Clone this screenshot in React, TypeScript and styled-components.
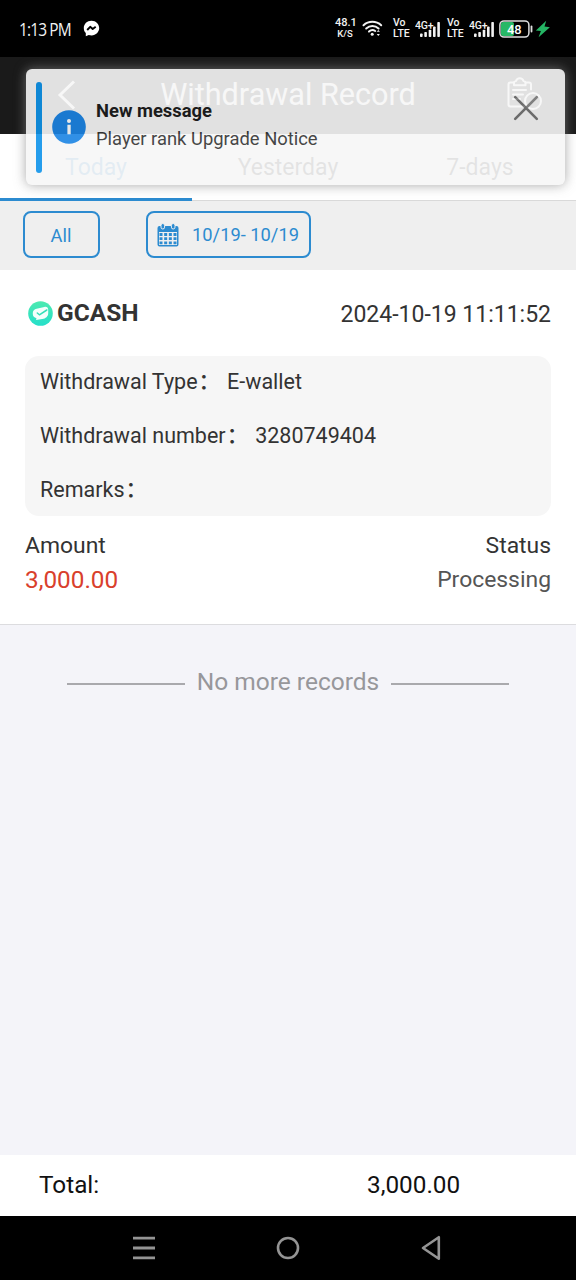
import React from "react";
import styled, { createGlobalStyle } from "styled-components";

const GlobalStyle = createGlobalStyle`
  * { box-sizing: border-box; }
  body {
    margin: 0;
    font-family: Roboto, "Noto Sans CJK SC", sans-serif;
    color: #333;
  }
  svg { display: block; flex: none; }
`;

const Screen = styled.div`
  position: relative;
  width: 576px;
  height: 1280px;
  display: flex;
  flex-direction: column;
  background: #f4f4f9;
  overflow: hidden;
`;

const StatusBar = styled.header`
  height: 57px;
  flex: none;
  display: flex;
  align-items: center;
  padding: 0 25px 0 19px;
  background: #000;
  color: #f2f2f2;
`;

const Clock = styled.span`
  font: 400 18px/24px "Open Sans", sans-serif;
  letter-spacing: -1px;
  width: 64px;
  white-space: nowrap;
  transform: scaleX(0.86);
  transform-origin: left;
`;

const StatusIcons = styled.div`
  display: flex;
  align-items: center;
  margin-left: auto;
`;

const StackedLabel = styled.div<{ $width: number; $gap?: number }>`
  width: ${(p) => p.$width}px;
  margin-right: ${(p) => p.$gap ?? 0}px;
  display: flex;
  flex-direction: column;
  font-size: 10.5px;
  line-height: 10.5px;
  font-weight: 500;
  white-space: nowrap;
`;

const Spacer = styled.span<{ $width: number }>`
  width: ${(p) => p.$width}px;
`;

const Speed = styled.span`
  font-size: 11px;
`;

const SpeedUnit = styled.span`
  align-self: center;
  font-size: 9.5px;
`;

const TitleBar = styled.div`
  height: 77px;
  flex: none;
  display: grid;
  grid-template-columns: 110px 1fr 110px;
  align-items: center;
  padding-bottom: 2px;
  background: #1a1a1a;
  color: #fff;
`;

const Title = styled.h1`
  margin: 0;
  font-size: 30.6px;
  line-height: 36px;
  font-weight: 400;
  text-align: center;
  white-space: nowrap;
`;

const BackSlot = styled.div`
  padding-left: 57px;
`;

const ActionSlot = styled.div`
  padding-left: 41px;
`;

const Tabs = styled.nav`
  height: 67px;
  flex: none;
  display: grid;
  grid-template-columns: repeat(3, 1fr);
  background: #fff;
  border-bottom: 1px solid #d9d9d9;
`;

const Tab = styled.div<{ $active?: boolean }>`
  height: 67px;
  display: flex;
  justify-content: center;
  padding-top: 20px;
  font-size: 23px;
  line-height: 28px;
  color: ${(p) => (p.$active ? "#2c8bd0" : "#333")};
  border-bottom: ${(p) => (p.$active ? "3px solid #2c8bd0" : "none")};
`;

const Filters = styled.div`
  height: 69px;
  flex: none;
  display: flex;
  gap: 46px;
  padding: 10px 23px 0;
  background: #efefef;
`;

const FilterButton = styled.button<{ $width: number; $drop?: number }>`
  width: ${(p) => p.$width}px;
  height: 47px;
  padding: ${(p) => p.$drop ?? 0}px 1px 0 0;
  display: flex;
  align-items: center;
  justify-content: center;
  gap: 13px;
  border: 2px solid #2c8bd0;
  border-radius: 8px;
  background: transparent;
  color: #2c8bd0;
  font: 400 18.3px/24px Roboto, sans-serif;
  white-space: nowrap;
`;

const Record = styled.section`
  height: 355px;
  flex: none;
  padding: 27px 25px 0;
  background: #fff;
  border-bottom: 1px solid #dcdcdf;
`;

const RecordHead = styled.div`
  display: flex;
  align-items: center;
  height: 32px;
  padding-left: 3px;
`;

const Wallet = styled.strong`
  margin-left: 4px;
  padding-bottom: 1px;
  font-size: 24.5px;
  font-weight: 700;
`;

const Timestamp = styled.time`
  margin-left: auto;
  padding-top: 2px;
  font-size: 23px;
`;

const Details = styled.div`
  height: 160px;
  margin: 27px 0 0;
  padding: 12px 15px;
  display: flex;
  flex-direction: column;
  gap: 27px;
  background: #f6f6f6;
  border-radius: 14px;
`;

const DetailRow = styled.div`
  display: flex;
  font-size: 21.5px;
  line-height: 27px;
  white-space: nowrap;
`;

const Colon = styled.span`
  margin: 0 7px 0 1px;
  font-weight: 500;
`;

const SummaryRow = styled.div<{ $top: number }>`
  display: flex;
  justify-content: space-between;
  margin-top: ${(p) => p.$top}px;
  font-size: 22.9px;
  line-height: 30px;
`;

const Amount = styled.span`
  font-size: 24.3px;
  color: #d9402c;
`;

const State = styled.span`
  color: #555;
`;

const EndOfList = styled.div`
  flex: 1;
  display: flex;
  align-items: flex-start;
  justify-content: center;
  gap: 12px;
  padding-top: 42px;
  font-size: 24.5px;
  line-height: 30px;
  color: #97979b;
  white-space: nowrap;
`;

const Rule = styled.span`
  width: 118px;
  height: 2px;
  margin-top: 16px;
  background: #a9a9ad;
`;

const TotalBar = styled.footer`
  height: 61px;
  flex: none;
  display: grid;
  grid-template-columns: 328px 1fr;
  align-items: center;
  padding: 0 0 2px 39px;
  background: #fff;
  color: #111;
  font-size: 24.3px;
`;

const SystemNav = styled.div`
  height: 64px;
  flex: none;
  display: grid;
  grid-template-columns: 72px repeat(3, 144px) 72px;
  align-items: center;
  justify-items: center;
  background: #000;
`;

const Toast = styled.div`
  position: absolute;
  z-index: 2;
  left: 26px;
  top: 69px;
  width: 539px;
  height: 116px;
  display: flex;
  align-items: center;
  padding: 0 26px 0 10px;
  border-radius: 6px;
  background: #f7f7f7;
  box-shadow: 0 0 12px rgba(136, 136, 136, 0.8);
  opacity: 0.9;
`;

const ToastAccent = styled.span`
  width: 6px;
  height: 91px;
  border-radius: 3px;
  background: #0e93ea;
`;

const ToastInfo = styled.div`
  margin-left: 10px;
`;

const ToastText = styled.div`
  margin-left: 10px;
  padding-bottom: 4px;
  flex: 1;
  display: flex;
  flex-direction: column;
  font-size: 18.4px;
  line-height: 28px;
  color: #333;
`;

const ToastTitle = styled.strong`
  color: #1c1c1c;
  font-size: 18.4px;
`;

const ToastClose = styled.div`
  margin-top: -38px;
`;

const MessengerIcon = () => (
  <svg width="17" height="17" viewBox="0 0 17 17">
    <path d="M8.500.7C4 .7.8 3.900.8 8c0 2.200.7 3.800 2 5.100v3.100l2.900-1.200c.9.250 1.800.4 2.800.4 4.500 0 7.700-3.200 7.700-7.300S13 .7 8.500.7Z" fill="#fff" />
    <path d="m4.200 10 3-3.200 2.500 2.100 3-2.200" fill="none" stroke="#000" strokeWidth="1.900" strokeLinejoin="round" />
  </svg>
);

const WifiIcon = () => (
  <svg width="21" height="17" viewBox="0 0 21 17" fill="none" stroke="#f2f2f2" strokeWidth="2" strokeLinecap="round">
    <path d="M1.500 5.200C6.500.6 14.200.6 19.200 5.200M4.200 8.500c3.600-3.200 8.800-3.200 12.400 0M7 11.600c1.900-1.700 4.400-1.800 6.200-.6" />
    <circle cx="10.200" cy="14.300" r="1.500" fill="#f2f2f2" stroke="none" />
    <path d="m16.300 9.900 1.600 1.900h-3.200ZM16.300 16l1.600-1.900h-3.200Z" fill="#f2f2f2" stroke="none" />
  </svg>
);

const SignalIcon = () => (
  <svg width="26" height="20" viewBox="0 0 26 20">
    <text x="0" y="9.500" fill="#f2f2f2" fontFamily="Roboto" fontSize="10.500" fontWeight="500" textLength="18.500">4G+</text>
    <g fill="#f2f2f2">
      <rect x="5" y="14.500" width="2.600" height="3.500" rx=".8" />
      <rect x="9.300" y="13" width="2.600" height="5" rx=".8" />
      <rect x="13.700" y="10.800" width="2.600" height="7.200" rx=".8" />
      <rect x="18" y="7.500" width="2.600" height="10.500" rx=".8" />
      <rect x="22.300" y="3" width="2.600" height="15" rx=".8" />
    </g>
  </svg>
);

const BatteryIcon = () => (
  <svg width="34" height="18" viewBox="0 0 34 18">
    <rect x="2" y="2" width="13" height="14" rx="2" fill="#27b866" />
    <rect x=".9" y=".9" width="29" height="16.200" rx="4" fill="none" stroke="#dedede" strokeWidth="1.500" />
    <path d="M32.500 6.500v5" stroke="#dedede" strokeWidth="1.800" strokeLinecap="round" />
    <text x="15.300" y="13.500" textAnchor="middle" fill="#fff" fontFamily="Roboto" fontSize="12.800" fontWeight="500">48</text>
  </svg>
);

const BoltIcon = () => (
  <svg width="16" height="18" viewBox="0 0 16 18">
    <path d="M11.200.8.9 10.500l5 .6L3.600 17.200 14.900 7.300l-5.400-.8Z" fill="#25b564" />
  </svg>
);

const BackIcon = () => (
  <svg width="20" height="30" viewBox="0 0 20 30" fill="none" stroke="#fff" strokeWidth="2.900">
    <path d="M17 1.500 3 15l14 13.500" />
  </svg>
);

const ClipboardIcon = () => (
  <svg width="36" height="36" viewBox="0 0 36 36" fill="none" stroke="#fff" strokeWidth="2" strokeLinejoin="round" strokeLinecap="round">
    <path d="M7 5.500H3.500a2 2 0 0 0-2 2v20a2 2 0 0 0 2 2H17M18.500 5.500H22a2 2 0 0 1 2 2v5" />
    <path d="M7 8.200V5.800c0-1 .8-1.500 2-1.700C9.500 2.300 11 1.200 12.700 1.200S16 2.300 16.500 4.100c1.200.2 2 .7 2 1.700v2.400Z" />
    <path d="M6 13h13M6 17.500h10M6 22h7" />
    <circle cx="26" cy="24" r="8" />
    <path d="m20.500 29.500 11-11" />
  </svg>
);

const CalendarIcon = () => (
  <svg width="22" height="24" viewBox="0 0 22 24">
    <path d="M2.500 3h17A2 2 0 0 1 21.500 5v16.500a2 2 0 0 1-2 2h-17a2 2 0 0 1-2-2V5a2 2 0 0 1 2-2Z" fill="#2c8bd0" />
    <path d="M2 9h18v13H2z" fill="#efefef" />
    <g fill="#2c8bd0" stroke="#efefef" strokeWidth="1">
      <rect x="4" y=".5" width="3.600" height="5.500" rx="1.800" />
      <rect x="14.400" y=".5" width="3.600" height="5.500" rx="1.800" />
    </g>
    <g stroke="#2c8bd0" strokeWidth="2.800" strokeDasharray="3 1.670">
      <path d="M2.500 11.500h17M2.500 15.700h17M2.500 19.900h17" />
    </g>
  </svg>
);

const WalletIcon = () => (
  <svg width="25" height="25" viewBox="0 0 25 25">
    <defs>
      <linearGradient id="mint" x1="0" y1="0" x2="0" y2="1">
        <stop stopColor="#4deab0" />
        <stop offset="1" stopColor="#25dfca" />
      </linearGradient>
    </defs>
    <circle cx="12.500" cy="12.500" r="12.300" fill="url(#mint)" />
    <path d="M4.800 12c0-2 1.500-3.700 3.800-4.200l7.700-1.900c2.300-.5 3.900.5 3.900 2.900v3.400c0 3.200-2.500 5.300-5.900 5.800L8 19l.5-1.700c-2.300-.5-3.700-2.200-3.700-4.200Z" fill="#f4fffc" />
    <path d="m9.300 12 2.100 1.800 7.400-4.800" fill="none" stroke="#35dfb8" strokeWidth="1.500" strokeLinecap="round" strokeLinejoin="round" />
  </svg>
);

const InfoIcon = () => (
  <svg width="34" height="34" viewBox="0 0 34 34">
    <circle cx="17" cy="17" r="16.800" fill="#1b84e4" />
    <circle cx="17" cy="11" r="2" fill="#fff" />
    <path d="M15.400 14.800h3.300v9.500h-3.300Z" fill="#fff" />
  </svg>
);

const CloseIcon = () => (
  <svg width="26" height="26" viewBox="0 0 26 26" stroke="#747474" strokeWidth="2.600" strokeLinecap="round">
    <path d="m2.200 2.200 21.600 21.600M23.800 2.200 2.200 23.800" />
  </svg>
);

const MenuIcon = () => (
  <svg width="22" height="24" viewBox="0 0 22 24" stroke="#949494" strokeWidth="2.800">
    <path d="M0 2.200h22M0 12h22M0 21.800h22" />
  </svg>
);

const HomeIcon = () => (
  <svg width="24" height="24" viewBox="0 0 24 24" fill="none" stroke="#949494" strokeWidth="2.600">
    <circle cx="12" cy="12" r="10" />
  </svg>
);

const PreviousIcon = () => (
  <svg width="22" height="26" viewBox="0 0 22 26" fill="none" stroke="#949494" strokeWidth="2.600" strokeLinejoin="round">
    <path d="M17.800 2.200v21.600L2 13Z" />
  </svg>
);

const SimStatus = ({ gap }: { gap: number }) => (
  <>
    <StackedLabel $width={16} $gap={6}>
      <span>Vo</span>
      <span>LTE</span>
    </StackedLabel>
    <SignalIcon />
    <Spacer $width={gap} />
  </>
);

const details = [
  { label: "Withdrawal Type", value: "E-wallet" },
  { label: "Withdrawal number", value: "3280749404" },
  { label: "Remarks", value: "" },
];

export default function App() {
  return (
    <>
      <GlobalStyle />
      <Screen>
        <StatusBar>
          <Clock>1:13 PM</Clock>
          <MessengerIcon />
          <StatusIcons>
            <StackedLabel $width={20} $gap={7}>
              <Speed>48.1</Speed>
              <SpeedUnit>K/S</SpeedUnit>
            </StackedLabel>
            <WifiIcon />
            <Spacer $width={10} />
            <SimStatus gap={6} />
            <SimStatus gap={4} />
            <BatteryIcon />
            <Spacer $width={2} />
            <BoltIcon />
          </StatusIcons>
        </StatusBar>

        <TitleBar>
          <BackSlot><BackIcon /></BackSlot>
          <Title>Withdrawal Record</Title>
          <ActionSlot><ClipboardIcon /></ActionSlot>
        </TitleBar>

        <Tabs>
          <Tab $active>Today</Tab>
          <Tab>Yesterday</Tab>
          <Tab>7-days</Tab>
        </Tabs>

        <Filters>
          <FilterButton $width={77} $drop={2}>All</FilterButton>
          <FilterButton $width={165}>
            <CalendarIcon />
            10/19- 10/19
          </FilterButton>
        </Filters>

        <Record>
          <RecordHead>
            <WalletIcon />
            <Wallet>GCASH</Wallet>
            <Timestamp>2024-10-19 11:11:52</Timestamp>
          </RecordHead>
          <Details>
            {details.map((d) => (
              <DetailRow key={d.label}>
                <span>{d.label}</span>
                <Colon>：</Colon>
                <span>{d.value}</span>
              </DetailRow>
            ))}
          </Details>
          <SummaryRow $top={15}>
            <span>Amount</span>
            <span>Status</span>
          </SummaryRow>
          <SummaryRow $top={4}>
            <Amount>3,000.00</Amount>
            <State>Processing</State>
          </SummaryRow>
        </Record>

        <EndOfList>
          <Rule />
          No more records
          <Rule />
        </EndOfList>

        <TotalBar>
          <span>Total:</span>
          <span>3,000.00</span>
        </TotalBar>

        <SystemNav>
          <span />
          <MenuIcon />
          <HomeIcon />
          <PreviousIcon />
        </SystemNav>

        <Toast>
          <ToastAccent />
          <ToastInfo><InfoIcon /></ToastInfo>
          <ToastText>
            <ToastTitle>New message</ToastTitle>
            <span>Player rank Upgrade Notice</span>
          </ToastText>
          <ToastClose><CloseIcon /></ToastClose>
        </Toast>
      </Screen>
    </>
  );
}
